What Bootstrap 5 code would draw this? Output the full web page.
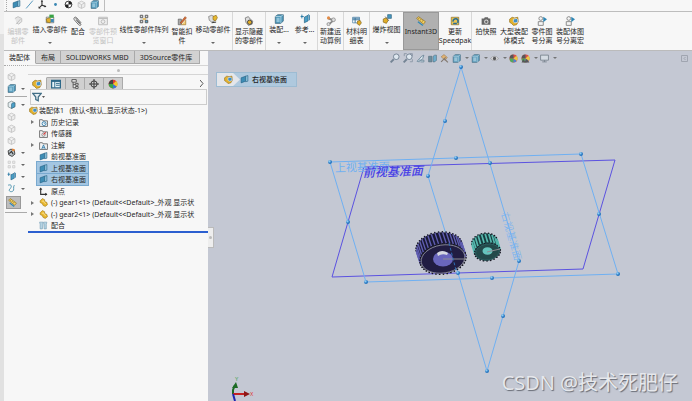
<!DOCTYPE html>
<html lang="en">
<head>
<meta charset="utf-8">
<meta name="viewport" content="width=device-width, initial-scale=1">
<title>装配体1 - SOLIDWORKS</title>
<link href="https://cdn.jsdelivr.net/npm/bootstrap@5.3.0/dist/css/bootstrap.min.css" rel="stylesheet">
<style>
:root{--panel:#f7f7f7;--dark:#262626;--view:#c4c8d3;--sel:#a3c6e2}
body{font:7px/9px "Noto Sans","Noto Sans CJK SC",sans-serif;color:var(--dark);background:var(--panel);overflow:hidden}
button{font:inherit;color:inherit;background:none;border:0;padding:0}
svg{display:block;flex:none}
.ic{width:10px;height:10px}
.ic-s{width:9px;height:9px}
.edge{width:4px;background:#e1e1e1;border-top:34px solid #f0f0f0}
.quickbar{height:12px;border-bottom:1px solid #bdbdbd}
.quickset{border-right:1px solid #bdbdbd;padding:0 5px 0 2px;gap:4px}
.grip{width:2px;align-self:stretch;border-left:1px dotted #aaa}
.ribbon{height:39px;border-bottom:1px solid #bbb}
.cmd{flex:none;display:flex;flex-direction:column;align-items:center;padding-top:4px;text-align:center;white-space:nowrap}
.cmd .ic{margin-bottom:1px}
.cmd.drop{padding-top:2px}
.cmd.drop::after{content:"";border:2px solid transparent;border-top-color:#666;margin-top:8px;border-bottom:0}
.cmd.off{color:#c4c4c4}
.cmd.sep{border-right:1px solid #d8d8d8}
.cmd.on{background:#b0b0b0;border:1px solid #999;padding-top:3px}
.w20{width:20px}.w24{width:24px}.w26{width:26px}.w28{width:28px}.w30{width:30px}.w33{width:33px}.w36{width:36px}.w39{width:39px}.w52{width:52px}
.side{width:204px;flex:none;position:relative}
.tabs button{height:13px;padding:0 5px;border-right:1px solid #a9a9a9;border-bottom:1px solid #a9a9a9;background:#d2d2d2}
.tabs button:last-child{padding-right:7px}
.tabs button.on{background:var(--panel);border-bottom-color:var(--panel)}
.panes{margin-top:1px}
.tools{width:24px;flex:none;gap:3px;padding:6px 0 0 3px;border-top:1px dotted #aaa}
.tools button{width:20px;display:flex;align-items:center;gap:5px}
.tools .drop::after,.hud .drop::after{content:"";border:2px solid transparent;border-top-color:#666;border-bottom:0}
.tools .on{width:15px;height:13px;background:#bdbdbd;border:1px solid #999;padding-left:1px;margin-left:-1px}
.tools hr{margin:0 0 0 -2px;width:22px;opacity:1;border-color:#aaa}
.split{height:10px;border:solid #d5d5d5;border-width:1px 0}
.split i,.handle i{width:3px;height:3px;border-radius:2px;background:#bbb}
.ftabs{padding-top:2px}
.ftabs button{width:19px;height:12px;display:flex;align-items:center;justify-content:center;background:#d0d0d0;border:solid #aaa;border-width:1px 1px 0 0}
.ftabs button.on{background:var(--panel);border-top-color:var(--panel)}
.filter{height:16px;border:1px solid #ccc;padding:0 1px;margin:0 1px 0 2px}
.tree{margin:0;padding:0;list-style:none;white-space:nowrap;border-bottom:2px solid #2b5fd0}
.tree li{height:11px;display:flex;align-items:center;padding-left:3px}
.tree li:nth-child(even){height:12px}
.tree li.root{padding-left:0}
.tree span{display:flex;align-items:center;gap:3px;padding:0 2px;height:100%}
.tree .root span{gap:1px;padding:0 1px}
.tree .sel span{background:var(--sel);box-shadow:0 0 0 1px #79a9cf}
.tree li::before{content:"";width:6px;flex:none}
.tree li.root::before{display:none}
.tree li.exp::before{content:"";width:0;height:0;border:2px solid transparent;border-left:3px solid #777;border-right:0;margin-right:3px}
.handle{position:absolute;left:204px;top:176px;width:6px;height:21px;background:#eee;border:1px solid #bbb;border-left:0;z-index:2}
.view{background:var(--view);position:relative;overflow:hidden}
.scene{position:absolute;inset:0;width:100%;height:100%}
.hud{position:relative;padding:2px 4px 0 182px;gap:3px}
.hud button{display:flex;align-items:center;gap:4px;opacity:.85}
.hud .drop{width:16px}
.crumb{position:relative;display:inline-flex;height:15px;margin:9px 0 0 8px;border:1px solid #9dbcd3;background:#afc9de;align-items:center}
.crumb .first{background:#e4e6ea;padding:0 7px;height:100%;display:flex;align-items:center;clip-path:polygon(0 0,70% 0,100% 50%,70% 100%,0 100%)}
.crumb a{color:#222;text-decoration:none;display:flex;gap:3px;align-items:center;padding-right:9px;font-weight:500}
.wm{position:absolute;right:14px;bottom:6px;font:20px/24px "Open Sans","Noto Sans CJK SC",sans-serif;color:#e6e8ec;text-shadow:1px 1px 1px #676b75}
</style>
<script src="https://cdn.jsdelivr.net/npm/bootstrap@5.3.0/dist/js/bootstrap.bundle.min.js"></script>
</head>
<body class="vh-100 d-flex">
<svg width="0" height="0" class="position-absolute" aria-hidden="true">
<symbol id="asm" viewBox="0 0 16 16"><path d="M1 5l4-3 4 1 5-1 1 7-3 5-5 1-3-3-3-2z" fill="#e2b22e" stroke="#8d6a16"/><path d="M7 5l5-1 2 2v4l-5 1-2-2z" fill="#3f8fc4" stroke="#eef"/></symbol>
<symbol id="part" viewBox="0 0 16 16"><path d="M2 5l4-4 4 2v3l4 2 1 4-4 3-4-2-1-3-4-2z" fill="#e9b82f" stroke="#9c7415"/><path d="M5 6l3-1 1 3 3 2" fill="none" stroke="#fbe69a" stroke-width="1.5"/></symbol>
<symbol id="plane" viewBox="0 0 16 16"><path d="M2 5l8-3v9l-8 3z" fill="#3d8db5" stroke="#1c5a7c"/><path d="M10 2l4-1v10l-4 1z" fill="#8cc3dc" stroke="#1c5a7c"/></symbol>
<symbol id="folder" viewBox="0 0 16 16"><path d="M1 3h5l1 2h8v10H1z" fill="#f2f2f2" stroke="#666" stroke-width="1.5"/></symbol>
<symbol id="history" viewBox="0 0 16 16"><use href="#folder"/><circle cx="9" cy="10" r="3.5" fill="#fff" stroke="#2878a8" stroke-width="1.5"/><path d="M9 8v2h2" stroke="#2878a8" fill="none"/></symbol>
<symbol id="sensor" viewBox="0 0 16 16"><use href="#folder"/><circle cx="8" cy="10" r="3" fill="none" stroke="#555"/><path d="M8 10l4-4" stroke="#d33" stroke-width="2"/></symbol>
<symbol id="note" viewBox="0 0 16 16"><use href="#folder"/><path d="M5 14l3-7 3 7M6 12h4" stroke="#2878a8" stroke-width="1.5" fill="none"/></symbol>
<symbol id="origin" viewBox="0 0 16 16"><path d="M3 2v11h11" fill="none" stroke="#333" stroke-width="2"/><path d="M0 5l3-4 3 4zM11 10l4 3-4 3z" fill="#333"/></symbol>
<symbol id="mates" viewBox="0 0 16 16"><path d="M2 14V6L1 2h6v4L6 14zM9 14V6L8 2h6l-1 4v8z" fill="#b5d3e3" stroke="#6c98b0"/></symbol>
<symbol id="clip" viewBox="0 0 16 16"><path d="M4 3l8 9c2 3-1 4-3 2L2 6c-2-3 2-6 4-3l7 8M5 6l6 7" fill="none" stroke="#666" stroke-width="1.5"/></symbol>
<symbol id="insert" viewBox="0 0 16 16"><path d="M2 5h12v9H2z" fill="#eee" stroke="#555"/><path d="M2 8l5-2 4 4-3 4-5-1z" fill="#e0b030" stroke="#86671a"/><path d="M7 1h7v5H7z" fill="#39a346"/><path d="M9 8h5v5H9z" fill="#3b88b8"/></symbol>
<symbol id="edit" viewBox="0 0 16 16"><path d="M3 4l5-3 6 3v5l-5 4-3-2M5 13l7-8" fill="#e5e5e5" stroke="#c0c0c0" stroke-width="1.5"/></symbol>
<symbol id="preview" viewBox="0 0 16 16"><path d="M1 2h14v12H1zM1 4h14" fill="#eee" stroke="#bbb" stroke-width="1.5"/><circle cx="8" cy="9" r="3" fill="none" stroke="#bbb" stroke-width="1.5"/></symbol>
<symbol id="pattern" viewBox="0 0 16 16"><g fill="#ddd" stroke="#555" stroke-width="1.5"><path d="M2 2h4v4H2zM10 2h4v4h-4zM2 10h4v4H2z"/><path d="M10 10h4v4h-4z" fill="#59a9d2"/></g><path d="M6 8h5" stroke="#dba21d" stroke-width="2"/></symbol>
<symbol id="fast" viewBox="0 0 16 16"><path d="M2 5h5v9H2z" fill="#aaa" stroke="#555"/><path d="M7 14h7V6" fill="#f4d078" stroke="#9a6c1d"/><path d="M5 11l8-10 2 2-8 9z" fill="#df6c32" stroke="#8b451d"/></symbol>
<symbol id="move" viewBox="0 0 16 16"><path d="M1 4l5-2 5 3v6l-5 2-4-3z" fill="#ddd" stroke="#666"/><path d="M8 4l5-2 2 4-3 5-4-2z" fill="#e7b82f" stroke="#86671a"/><path d="M6 14l7-1" stroke="#333" stroke-width="1.5"/></symbol>
<symbol id="hide" viewBox="0 0 16 16"><path d="M2 3l5-2 3 4 4 3-1 5-6 2-4-5z" fill="#ddd" stroke="#555"/><circle cx="9" cy="10" r="3.5" fill="#e1ad27" stroke="#444" stroke-width="1.5"/></symbol>
<symbol id="wheel" viewBox="0 0 16 16"><path d="M2 5l5-3 6 2 1 7-5 4-6-3z" fill="#b9c3c8" stroke="#333" stroke-width="1.5"/><path d="M4 10l4-4 3 5" fill="none" stroke="#333" stroke-width="2"/><path d="M9 1l5 1-1 4-4-1z" fill="#e5863a"/></symbol>
<symbol id="cube" viewBox="0 0 16 16"><path d="M2 4l4-3h9v10l-4 4H2z" fill="#4b95b7" stroke="#355d72"/><path d="M2 4h9v11M11 4l4-3" fill="none" stroke="#d3eaf3"/><path d="M4 6h5v7H4z" fill="#92c4da"/></symbol>
<symbol id="ref" viewBox="0 0 16 16"><path d="M7 5l6-3v9l-6 3z" fill="#4a9fc7" stroke="#1c5a7c"/><path d="M1 4h5M3 1v6M13 1l2 1v8" stroke="#2677a4" stroke-width="1.5" fill="none"/></symbol>
<symbol id="motion" viewBox="0 0 16 16"><path d="M4 4l8 3-7 6" fill="none" stroke="#888" stroke-width="3"/><circle cx="4" cy="3" r="2.5" fill="#e28a45"/><circle cx="12" cy="6" r="3" fill="#ddd" stroke="#777"/><circle cx="4" cy="13" r="2.5" fill="#ddd" stroke="#777"/></symbol>
<symbol id="bom" viewBox="0 0 16 16"><path d="M1 2h11v9H1z" fill="#fff" stroke="#33719a"/><path d="M1 3.5h11M1 6h11M5 3v8" stroke="#33719a" stroke-width="1.5"/><path d="M9 8l4-1 2 4-3 4-4-3z" fill="#e1ad27" stroke="#7a601e"/></symbol>
<symbol id="explode" viewBox="0 0 16 16"><path d="M9 1h6v6H9z" fill="#4797bf" stroke="#2b5f7a"/><path d="M2 8l5-2 3 4-3 5-5-2z" fill="#e1ad27" stroke="#7a601e"/><path d="M5 4l6 7" stroke="#555"/></symbol>
<symbol id="instant" viewBox="0 0 16 16"><path d="M1 4l3-3 11 8-3 4z" fill="#f0cf62" stroke="#8d6a16"/><path d="M4 5l1-2M7 7l1-2M10 9l1-2" stroke="#6b5215"/><path d="M3 9l8 6" stroke="#3188b5" stroke-width="2"/></symbol>
<symbol id="speed" viewBox="0 0 16 16"><path d="M2 2h12v12H2z" fill="#e9c351" stroke="#80651e"/><path d="M5 9a4 4 0 1 1 7 2M5 12h6" fill="none" stroke="#2a6e96" stroke-width="2.5"/></symbol>
<symbol id="camera" viewBox="0 0 16 16"><path d="M1 4h4l1-2h5l1 2h3v10H1z" fill="#666"/><circle cx="8.5" cy="9" r="3.5" fill="#ddd"/><circle cx="8.5" cy="9" r="2" fill="#666"/></symbol>
<symbol id="man" viewBox="0 0 16 16"><circle cx="6" cy="4" r="3" fill="#f4f4f4" stroke="#888" stroke-width="1.5"/><path d="M2 15V9h8v6z" fill="#f4f4f4" stroke="#888" stroke-width="1.5"/><path d="M10 1l6 4-6 5z" fill="#2d85b3"/></symbol>
<symbol id="list" viewBox="0 0 16 16"><path d="M1 2h14v12H1z" fill="#e8f3f8" stroke="#2f6989" stroke-width="2"/><path d="M1 4h14M6 2v12M8 7h6M8 10h6" stroke="#2f6989" stroke-width="1.5"/></symbol>
<symbol id="config" viewBox="0 0 16 16"><path d="M3 1h7v4H3zM5 5v9h4M5 9h4M9 7h4v3H9zM9 12h4v3H9z" fill="#eee" stroke="#555" stroke-width="1.5"/></symbol>
<symbol id="target" viewBox="0 0 16 16"><circle cx="8" cy="8" r="5" fill="none" stroke="#333" stroke-width="1.5"/><path d="M8 0v16M0 8h16" stroke="#333" stroke-width="1.5"/></symbol>
<symbol id="ball" viewBox="0 0 16 16"><circle cx="8" cy="8" r="7" fill="#e03c32"/><path d="M8 8V1a7 7 0 0 0-7 7z" fill="#444"/><path d="M8 8H1a7 7 0 0 0 7 7z" fill="#3aa648"/><path d="M8 8l6 4a7 7 0 0 1-6 3z" fill="#3977d4"/><path d="M8 8l5-5a7 7 0 0 1 1 9z" fill="#f0c92f"/></symbol>
<symbol id="funnel" viewBox="0 0 16 16"><path d="M1 2h14L10 8v6l-4-2V8z" fill="#e7eff3" stroke="#426f86" stroke-width="2"/></symbol>
<symbol id="lens" viewBox="0 0 16 16"><circle cx="10" cy="6" r="4.5" fill="#e3edf4" stroke="#66788a" stroke-width="1.5"/><path d="M6 10l-5 5" stroke="#66788a" stroke-width="3"/></symbol>
<symbol id="lensbox" viewBox="0 0 16 16"><path d="M2 5V1h4M11 1h4v4M15 10v4h-4" fill="none" stroke="#66788a"/><use href="#lens"/></symbol>
<symbol id="prev" viewBox="0 0 16 16"><path d="M2 13l8-9 4-2-2 6-6 6zM5 11h9v3H8" fill="#dce9f0" stroke="#58788c" stroke-width="1.5"/></symbol>
<symbol id="section" viewBox="0 0 16 16"><path d="M1 4h6v10H1z" fill="#5f8494" stroke="#3e5a68"/><path d="M9 4l3-2h3v9l-3 3H9z" fill="#5fa9cc" stroke="#3e5a68"/></symbol>
<symbol id="paint" viewBox="0 0 16 16"><path d="M2 5l5-4 6 5-4 5z" fill="#e7b060" stroke="#8e6a3e"/><path d="M7 8l7 7M2 14l8-8" stroke="#786c60" stroke-width="2"/></symbol>
<symbol id="eye" viewBox="0 0 16 16"><path d="M1 8q7-8 14 0q-7 7-14 0z" fill="#eee" stroke="#777"/><circle cx="8" cy="8" r="3" fill="#444"/></symbol>
<symbol id="screen" viewBox="0 0 16 16"><path d="M1 2h14v9H1zM8 11v3M4 14h8" fill="#d8e0e6" stroke="#6a7580" stroke-width="1.5"/></symbol>
<symbol id="landscape" viewBox="0 0 16 16"><use href="#ball"/><path d="M1 15l3-6 3 4 3-4 5 6z" fill="#444"/></symbol>
<symbol id="slash" viewBox="0 0 16 16"><path d="M2 15L14 1" stroke="#3a87b3" stroke-width="1.5"/></symbol>
<symbol id="axes" viewBox="0 0 16 16"><path d="M7 1v8l7 3M7 9l-5 5" stroke="#333" stroke-width="2" fill="none"/><path d="M5 3l2-3 2 3zM12 9l3 3-4 1zM1 11v4h4z" fill="#333"/></symbol>
<symbol id="dot" viewBox="0 0 16 16"><circle cx="8" cy="8" r="2.5" fill="#3a87b3"/></symbol>
<symbol id="mass" viewBox="0 0 16 16"><circle cx="8" cy="8" r="6" fill="#fff" stroke="#222" stroke-width="1.5"/><path d="M8 8V2a6 6 0 0 1 6 6zM8 8v6a6 6 0 0 1-6-6z" fill="#222"/></symbol>
<symbol id="ghost" viewBox="0 0 16 16"><path d="M2 5l6-3 6 3v7l-6 3-6-3zM2 5l6 3 6-3M8 8v7" fill="#ececec" stroke="#c4c4c4" stroke-width="1.5"/></symbol>
<symbol id="fillet" viewBox="0 0 16 16"><path d="M2 5l6-3 6 3v7l-6 3-6-3z" fill="#e4edf1" stroke="#566"/><path d="M8 8c0-3 3-3 6-3v7l-6 3z" fill="#4a9fc7" stroke="#2b5f7a"/></symbol>
<symbol id="grid4" viewBox="0 0 16 16"><path d="M2 2h4v4H2zM10 2h4v4h-4zM2 10h4v4H2zM10 10h4v4h-4z" fill="#eee" stroke="#ccc" stroke-width="1.5"/></symbol>
<symbol id="curve" viewBox="0 0 16 16"><path d="M2 2c8-2 6 4 3 7s1 6 5 4 0-7 3-11" fill="none" stroke="#3a87a5" stroke-width="1.5"/></symbol>
</svg>
<div class="edge flex-shrink-0"></div>
<div class="d-flex flex-column flex-grow-1 overflow-hidden">
<div class="quickbar d-flex flex-shrink-0">
<div class="quickset d-flex"><i class="grip"></i>
<svg class="ic-s"><use href="#plane"/></svg><svg class="ic-s"><use href="#slash"/></svg><svg class="ic-s"><use href="#axes"/></svg><svg class="ic-s"><use href="#dot"/></svg><svg class="ic-s"><use href="#mass"/></svg><svg class="ic-s"><use href="#ghost"/></svg><svg class="ic-s"><use href="#cube"/></svg></div>
</div>
<div class="ribbon d-flex flex-shrink-0">
<button class="cmd off w28"><svg class="ic"><use href="#edit"/></svg>编辑零<br>部件</button>
<button class="cmd drop w36"><svg class="ic"><use href="#insert"/></svg>插入零部件</button>
<button class="cmd w20"><svg class="ic"><use href="#clip"/></svg>配合</button>
<button class="cmd off w30"><svg class="ic"><use href="#preview"/></svg>零部件预<br>览窗口</button>
<button class="cmd drop w52"><svg class="ic"><use href="#pattern"/></svg>线性零部件阵列</button>
<button class="cmd w24"><svg class="ic"><use href="#fast"/></svg>智能扣<br>件</button>
<button class="cmd drop sep w39"><svg class="ic"><use href="#move"/></svg>移动零部件</button>
<button class="cmd sep w33"><svg class="ic"><use href="#hide"/></svg>显示隐藏<br>的零部件</button>
<button class="cmd drop w26"><svg class="ic"><use href="#cube"/></svg>装配...</button>
<button class="cmd drop sep w26"><svg class="ic"><use href="#ref"/></svg>参考...</button>
<button class="cmd sep w26"><svg class="ic"><use href="#motion"/></svg>新建运<br>动算例</button>
<button class="cmd sep w26"><svg class="ic"><use href="#bom"/></svg>材料明<br>细表</button>
<button class="cmd drop w33"><svg class="ic"><use href="#explode"/></svg>爆炸视图</button>
<button class="cmd on w36"><svg class="ic"><use href="#instant"/></svg>Instant3D</button>
<button class="cmd sep w33"><svg class="ic"><use href="#speed"/></svg>更新<br>Speedpak</button>
<button class="cmd w28"><svg class="ic"><use href="#camera"/></svg>拍快照</button>
<button class="cmd w28"><svg class="ic"><use href="#asm"/></svg>大型装配<br>体模式</button>
<button class="cmd w28"><svg class="ic"><use href="#man"/></svg>零件图<br>号分离</button>
<button class="cmd w28"><svg class="ic"><use href="#man"/></svg>装配体图<br>号分离宏</button>
</div>
<div class="d-flex flex-grow-1 overflow-hidden">
<div class="side d-flex flex-column">
<div class="tabs d-flex"><button class="on">装配体</button><button>布局</button><button>SOLIDWORKS MBD</button><button>3DSource零件库</button></div>
<div class="panes d-flex flex-grow-1">
<div class="tools d-flex flex-column">
<button aria-label="Insert component"><svg class="ic-s"><use href="#ghost"/></svg></button>
<button class="drop" aria-label="Assembly feature"><svg class="ic-s"><use href="#cube"/></svg></button>
<hr>
<button class="drop" aria-label="Fillet"><svg class="ic-s"><use href="#fillet"/></svg></button>
<button aria-label="Chamfer"><svg class="ic-s"><use href="#ghost"/></svg></button>
<button aria-label="Shell"><svg class="ic-s"><use href="#ghost"/></svg></button>
<button aria-label="Rib"><svg class="ic-s"><use href="#ghost"/></svg></button>
<button class="drop" aria-label="Hole wizard"><svg class="ic-s"><use href="#wheel"/></svg></button>
<button class="drop" aria-label="Pattern"><svg class="ic-s"><use href="#grid4"/></svg></button>
<button class="drop" aria-label="Reference geometry"><svg class="ic-s"><use href="#ref"/></svg></button>
<button class="drop" aria-label="Curves"><svg class="ic-s"><use href="#curve"/></svg></button>
<button class="on" aria-label="Instant3D"><svg class="ic-s"><use href="#instant"/></svg></button>
<hr>
</div>
<div class="flex-grow-1">
<div class="split d-flex align-items-center justify-content-center"><i></i></div>
<div class="ftabs d-flex align-items-center"><button class="on" aria-label="Tree"><svg class="ic"><use href="#asm"/></svg></button><button aria-label="Properties"><svg class="ic"><use href="#list"/></svg></button><button aria-label="Configurations"><svg class="ic"><use href="#config"/></svg></button><button aria-label="Dimensions"><svg class="ic"><use href="#target"/></svg></button><button aria-label="Display"><svg class="ic"><use href="#ball"/></svg></button>
<svg class="ms-auto me-1" width="4" height="7" viewBox="0 0 4 7"><path d="M0 0l3 3.5L0 7" fill="none" stroke="#555"/></svg></div>
<div class="filter d-flex align-items-center"><svg class="ic"><use href="#funnel"/></svg><svg width="3" height="2" viewBox="0 0 3 2"><path d="M0 0h3L1.5 2z" fill="#555"/></svg></div>
<ul class="tree">
<li class="root"><span><svg class="ic-s"><use href="#asm"/></svg>装配体1&nbsp;&nbsp; (默认&lt;默认_显示状态-1&gt;)</span></li>
<li class="exp"><span><svg class="ic-s"><use href="#history"/></svg>历史记录</span></li>
<li><span><svg class="ic-s"><use href="#sensor"/></svg>传感器</span></li>
<li class="exp"><span><svg class="ic-s"><use href="#note"/></svg>注解</span></li>
<li><span><svg class="ic-s"><use href="#plane"/></svg>前视基准面</span></li>
<li class="sel"><span><svg class="ic-s"><use href="#plane"/></svg>上视基准面</span></li>
<li class="sel"><span><svg class="ic-s"><use href="#plane"/></svg>右视基准面</span></li>
<li><span><svg class="ic-s"><use href="#origin"/></svg>原点</span></li>
<li class="exp"><span><svg class="ic-s"><use href="#part"/></svg>(-) gear1&lt;1&gt; (Default&lt;&lt;Default&gt;_外观 显示状</span></li>
<li class="exp"><span><svg class="ic-s"><use href="#part"/></svg>(-) gear2&lt;1&gt; (Default&lt;&lt;Default&gt;_外观 显示状</span></li>
<li><span><svg class="ic-s"><use href="#mates"/></svg>配合</span></li>
</ul>
</div>
</div>
<div class="handle d-flex align-items-center justify-content-center"><i></i></div>
</div>
<div class="view flex-grow-1">
<svg class="scene" viewBox="208 51 484 350" preserveAspectRatio="xMinYMin meet">
<defs><radialGradient id="knob" cx=".35" cy=".3"><stop offset="0" stop-color="#9fdcff"/><stop offset="1" stop-color="#2676c0"/></radialGradient></defs>
<g fill="none" stroke-width="1"><path d="M364 167L615 160 583 269 332 277z" stroke="#5b52e0"/><path d="M330 162L581 154 618 274 366 282z" stroke="#6fb0f2"/></g>
<path d="M458 273L428 176 461 67 519 261 487 371z" fill="none" stroke="#6fb0f2"/>
<g id="gears"></g>
<g id="knobs" fill="url(#knob)"></g>
<g font-family="Noto Sans CJK SC,sans-serif"><text x="335" y="172" font-size="11" fill="#6fb0f2" transform="rotate(-2 335 172)">上视基准面</text>
<text x="363" y="177" font-size="12" font-weight="500" font-style="italic" fill="#473fe6" transform="rotate(-2 363 177)">前视基准面</text>
<text x="501" y="213" font-size="10" font-weight="300" fill="#6fb0f2" transform="rotate(74 501 213)">右视基准面</text></g>
<g font-size="5" font-family="Liberation Sans,sans-serif"><path d="M233 394v-4l2-5" stroke="#1c6b24" stroke-width="2" fill="none"/><path d="M232 388l4-6 2 6z" fill="#1c6b24"/><path d="M233 394h13" stroke="#c42020" stroke-width="2"/><path d="M244 391l6 3-6 3z" fill="#8e1616"/><path d="M233 394l2 7" stroke="#1b24b0" stroke-width="2"/><text x="235" y="381" fill="#2f9a3a">Y</text><text x="250" y="396" fill="#e03030">X</text></g>
</svg>
<div class="hud d-flex align-items-center">
<button aria-label="Zoom to fit"><svg class="ic"><use href="#lens"/></svg></button><button aria-label="Zoom area"><svg class="ic"><use href="#lensbox"/></svg></button><button aria-label="Previous view"><svg class="ic-s"><use href="#prev"/></svg></button><button aria-label="Section"><svg class="ic-s"><use href="#section"/></svg></button><button aria-label="Annotation"><svg class="ic-s"><use href="#paint"/></svg></button><button class="drop" aria-label="Orientation"><svg class="ic-s"><use href="#cube"/></svg></button><button class="drop" aria-label="Style"><svg class="ic-s"><use href="#cube"/></svg></button><button class="drop" aria-label="Hide/show"><svg class="ic-s"><use href="#eye"/></svg></button><button aria-label="Appearance"><svg class="ic-s"><use href="#ball"/></svg></button><button class="drop" aria-label="Scene"><svg class="ic-s"><use href="#landscape"/></svg></button><button class="drop" aria-label="View settings"><svg class="ic-s"><use href="#screen"/></svg></button>
<svg class="ms-auto" width="7" height="7" viewBox="0 0 7 7"><path d="M.5.5h6v6h-6zM4.5 2L3 3.5 4.5 5" fill="none" stroke="#a0a5b0"/></svg>
</div>
<nav class="crumb" aria-label="breadcrumb"><span class="first"><svg class="ic-s"><use href="#asm"/></svg></span><a href="#"><svg class="ic-s"><use href="#plane"/></svg>右视基准面</a></nav>
<div class="wm">CSDN @技术死肥仔</div>
</div>
</div>
</div>
<script>
const NS='http://www.w3.org/2000/svg';
const add=(p,t,a)=>{const e=document.createElementNS(NS,t);for(const k in a)e.setAttribute(k,a[k]);p.append(e)};
const knobs=document.getElementById('knobs');
[[330,162],[581,154],[618,274],[366,282],[348,222],[456,158],[599,214],[492,278],[461,67],[445,121],[490,163],[428,176],[519,261],[503,316],[487,371],[458,273]]
.forEach(([cx,cy])=>add(knobs,'circle',{cx,cy,r:2}));
// A spur gear seen obliquely: back rim, ridged side, front face, bore.
function gear(o){
const g=document.getElementById('gears'),r=o.rot*Math.PI/180;
const pt=(a,s)=>{const x=o.rx*s*Math.cos(a),y=o.ry*s*Math.sin(a);return[o.cx+x*Math.cos(r)-y*Math.sin(r),o.cy+x*Math.sin(r)+y*Math.cos(r)]};
for(let k=0;k<=12;k++)add(g,'ellipse',{cx:o.cx+o.dx*k/12,cy:o.cy+o.dy*k/12,rx:o.rx,ry:o.ry,transform:`rotate(${o.rot} ${o.cx+o.dx*k/12} ${o.cy+o.dy*k/12})`,fill:o.dark});
for(let i=0;i<o.n;i++){const a=i*2*Math.PI/o.n,[x,y]=pt(a,1.03);
if(Math.sin(a)<.25)add(g,'path',{d:`M${x} ${y}l${o.dx} ${o.dy}`,stroke:o.light,'stroke-width':o.tw,fill:'none'});
if(Math.sin(a)<.1)add(g,'circle',{cx:x+o.dx,cy:y+o.dy,r:.8,fill:'#171722'});
add(g,'circle',{cx:x,cy:y,r:.9,fill:'#171722'})}
add(g,'ellipse',{cx:o.cx,cy:o.cy,rx:o.rx-.5,ry:o.ry-.5,transform:`rotate(${o.rot} ${o.cx} ${o.cy})`,fill:o.face,stroke:o.rim,'stroke-width':.7});
add(g,'ellipse',{cx:o.cx+o.bx,cy:o.cy+o.by,rx:o.br,ry:o.br*.75,fill:o.bore});
}
gear({cx:443,cy:259,rx:22.5,ry:14.5,rot:-9,dx:-4,dy:-12,n:38,tw:1.4,dark:'#191933',light:'#5f5db0',face:'#211d42',rim:'#a8a8b4',bx:0,by:0,br:10,bore:'#6966bd'});
gear({cx:487.5,cy:252,rx:12.5,ry:8.5,rot:-9,dx:-3,dy:-10,n:22,tw:1.7,dark:'#173c3e',light:'#55b8ae',face:'#23494a',rim:'#31686a',bx:0,by:-1,br:5,bore:'#66c4bd'});
const g=document.getElementById('gears');
add(g,'path',{d:'M437 253q5-4 11 0l-1 2q-5-2-9 1z',fill:'#d5d8e0'});
add(g,'path',{d:'M443 259h23M487 252l13-3',stroke:'#8c8c92','stroke-width':1});
add(g,'path',{d:'M449 243l7 27',stroke:'#2d6fb8','stroke-width':1,'stroke-dasharray':'3 2'});
</script>
</body>
</html>
